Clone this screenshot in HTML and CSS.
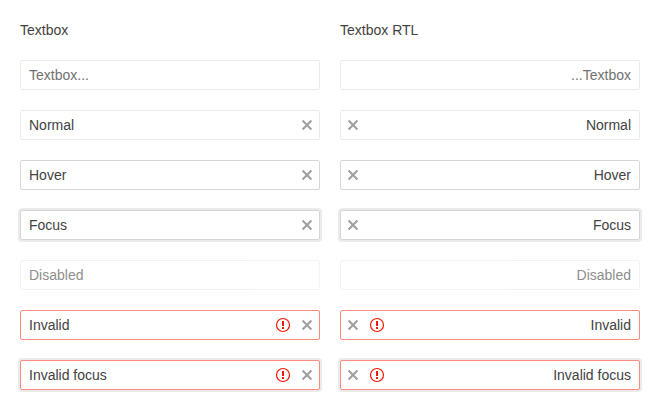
FILE: index.html
```html
<!DOCTYPE html>
<html lang="en">
<head>
<meta charset="utf-8">
<title>Textbox</title>
<link rel="stylesheet" href="styles.css">
</head>
<body>
<svg class="symbols" width="0" height="0" aria-hidden="true">
  <symbol id="clear" viewBox="0 0 16 16"><path d="M3.6 3.6l8.8 8.8M12.4 3.6l-8.8 8.8" fill="none" stroke="currentColor" stroke-width="2.1"/></symbol>
  <symbol id="warning" viewBox="0 0 16 16"><circle cx="8" cy="8" r="6.5" fill="none" stroke="currentColor" stroke-width="1.2"/><path d="M7 4h2v5H7zM7 10h2v2H7z" fill="currentColor"/></symbol>
</svg>
<main class="page">
  <section class="column">
    <h1 class="title">Textbox</h1>
    <div class="textbox placeholder"><span class="value">Textbox...</span></div>
    <div class="textbox"><span class="value">Normal</span><svg class="icon clear"><use href="#clear"/></svg></div>
    <div class="textbox hover"><span class="value">Hover</span><svg class="icon clear"><use href="#clear"/></svg></div>
    <div class="textbox focus"><span class="value">Focus</span><svg class="icon clear"><use href="#clear"/></svg></div>
    <div class="textbox disabled"><span class="value">Disabled</span></div>
    <div class="textbox invalid"><span class="value">Invalid</span><svg class="icon warning"><use href="#warning"/></svg><svg class="icon clear"><use href="#clear"/></svg></div>
    <div class="textbox focus invalid"><span class="value">Invalid focus</span><svg class="icon warning"><use href="#warning"/></svg><svg class="icon clear"><use href="#clear"/></svg></div>
  </section>
  <section class="column">
    <h1 class="title">Textbox RTL</h1>
    <div class="textbox placeholder" dir="rtl"><span class="value">Textbox...</span></div>
    <div class="textbox" dir="rtl"><span class="value">Normal</span><svg class="icon clear"><use href="#clear"/></svg></div>
    <div class="textbox hover" dir="rtl"><span class="value">Hover</span><svg class="icon clear"><use href="#clear"/></svg></div>
    <div class="textbox focus" dir="rtl"><span class="value">Focus</span><svg class="icon clear"><use href="#clear"/></svg></div>
    <div class="textbox disabled" dir="rtl"><span class="value">Disabled</span></div>
    <div class="textbox invalid" dir="rtl"><span class="value">Invalid</span><svg class="icon warning"><use href="#warning"/></svg><svg class="icon clear"><use href="#clear"/></svg></div>
    <div class="textbox focus invalid" dir="rtl"><span class="value">Invalid focus</span><svg class="icon warning"><use href="#warning"/></svg><svg class="icon clear"><use href="#clear"/></svg></div>
  </section>
</main>
</body>
</html>
```
FILE: styles.css
```css
* { box-sizing: border-box; }
body {
  margin: 0;
  background: #fff;
  color: #424242;
  font: 14px/20px "Liberation Sans", Arial, sans-serif;
}
.symbols { display: none; }
.page {
  display: grid;
  grid-template-columns: 300px 300px;
  gap: 20px;
  padding: 20px;
}
.column {
  display: flex;
  flex-direction: column;
  gap: 20px;
}
.title {
  margin: 0;
  font-size: 14px;
  font-weight: 400;
  line-height: 20px;
}
.textbox {
  display: flex;
  align-items: center;
  height: 30px;
  padding-inline: 8px 4px;
  border: 1px solid rgba(0, 0, 0, 0.08);
  border-radius: 2px;
}
.value { flex: 1; }
.icon {
  width: 16px;
  height: 16px;
  flex: none;
}
.icon + .icon { margin-inline-start: 8px; }
.clear { color: #a0a0a0; }
.warning { color: #f31700; }
.placeholder .value { color: #717171; }
.hover,
.focus { border-color: rgba(0, 0, 0, 0.16); }
.focus { box-shadow: 0 0 0 2px rgba(0, 0, 0, 0.08); }
.disabled { opacity: 0.6; }
.invalid { border-color: #f98b80; }
```
